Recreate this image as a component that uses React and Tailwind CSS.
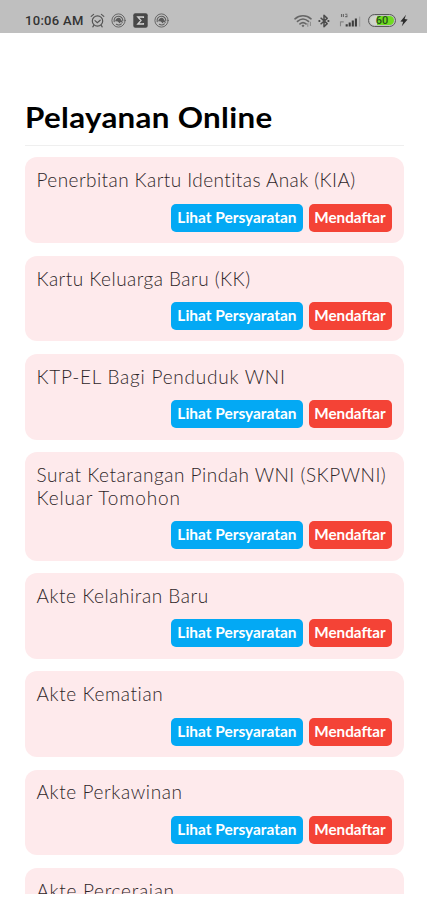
const services = [
  { lines: [{ text: 'Penerbitan Kartu Identitas Anak (KIA)', spacing: 'tracking-[0.43px]' }] },
  { lines: [{ text: 'Kartu Keluarga Baru (KK)', spacing: 'tracking-[0.47px]' }] },
  { lines: [{ text: 'KTP-EL Bagi Penduduk WNI', spacing: 'tracking-[0.77px]' }] },
  {
    lines: [
      { text: 'Surat Ketarangan Pindah WNI (SKPWNI)', spacing: 'tracking-[0.52px]' },
      { text: 'Keluar Tomohon', spacing: 'tracking-[0.83px]' },
    ],
  },
  { lines: [{ text: 'Akte Kelahiran Baru', spacing: 'tracking-[0.55px]' }] },
  { lines: [{ text: 'Akte Kematian', spacing: 'tracking-[0.6px]' }] },
  { lines: [{ text: 'Akte Perkawinan', spacing: 'tracking-[0.6px]' }] },
  { lines: [{ text: 'Akte Perceraian', spacing: 'tracking-[0.7px]' }] },
]

function AlarmIcon() {
  return (
    <svg className="w-[15px] h-[15px]" viewBox="0 0 15 15" fill="none" stroke="#555" strokeWidth="1.2" strokeLinecap="round">
      <circle cx="7.5" cy="8" r="5.2" />
      <path d="M1.2 3.4 3.6 1.4M13.8 3.4 11.4 1.4M5 7.6 7.3 9.6 10.2 7.2M3.8 12.4 2.8 13.8M11.2 12.4 12.2 13.8" />
    </svg>
  )
}

function SwirlIcon() {
  return (
    <svg className="w-[15px] h-[15px]" viewBox="0 0 15 15" fill="none" stroke="#5c5c5c" strokeLinecap="round">
      <circle cx="7.5" cy="7.5" r="6.6" strokeWidth="0.9" />
      <path d="M3.2 8.6C2.6 5.6 4.6 3.2 7.3 3.2c2.8 0 4.7 2 4.5 4.6M5.4 11.3c1.6.9 3.6.7 4.9-.4" strokeWidth="1.1" />
      <path d="M5 7.8C5.6 5.8 7 5.2 8.6 5.8L10.4 8.6 7.8 7.6 8.6 9.4" strokeWidth="1.5" fill="#5c5c5c" />
    </svg>
  )
}

function SigmaIcon() {
  return (
    <svg className="w-[15px] h-[15px]" viewBox="0 0 15 15" fill="none">
      <rect x="0.3" y="0.3" width="14.4" height="14.4" rx="2" fill="#484848" />
      <path d="M10.4 5V4H4.8L8 7.5 4.8 11h5.6v-1" stroke="#d2d2d2" strokeWidth="1.3" />
    </svg>
  )
}

function WifiIcon() {
  return (
    <svg className="w-[19px] h-[14px]" viewBox="0 0 19 14" fill="none" stroke="#666" strokeWidth="1.6" strokeLinecap="round">
      <path d="M1 4.8C5.6.8 12.4.8 17 4.8M3.5 7.4c3.4-3 7.6-3 11 0M6 9.9c2-1.8 4-1.8 6 0" />
      <path d="M9 10.4 7.5 11.7 9 13.2l1.5-1.5z" fill="#666" stroke="none" />
      <path d="M13.8 12.4v-2.8M16.4 11.6V8.2" stroke="#8a8a8a" strokeWidth="1" />
    </svg>
  )
}

function BluetoothIcon() {
  return (
    <svg className="w-[12px] h-[14px]" viewBox="0 0 12 14" fill="none" stroke="#4c4c4c" strokeWidth="1.5" strokeLinejoin="round">
      <path d="M2.6 3.8 9.2 9.6 6 12.8V1.2L9.2 4.4 2.6 10.2" />
      <path d="M1.4 5.9v2.2M10.4 5.9v2.2" strokeWidth="1.8" />
    </svg>
  )
}

function SignalIcon() {
  return (
    <svg className="w-[22px] h-[15px]" viewBox="0 0 22 15" fill="none">
      <path d="M2.5 1v3M4.4 1v3M6.2 1.2h2.2M6.2 3.6h2.2M8 2.2v1.6" stroke="#666" strokeWidth="1.1" />
      <path d="M1.5 8.6v4.6M1.5 8.9h3.2" stroke="#858585" strokeWidth="1.1" />
      <path d="M7.7 11.2v2.4M10.7 9.6v4M13.8 7.6v6M16.9 5.6v8" stroke="#3d3d3d" strokeWidth="2.1" />
      <path d="M20.6 3.6v10" stroke="#a0a0a0" strokeWidth="1.3" />
    </svg>
  )
}

function BoltIcon() {
  return (
    <svg className="w-[8px] h-[13px]" viewBox="0 0 8 12" fill="#2c2c2c">
      <path d="M6 .2.4 6.9l2.8.3-1.4 4.6L7.6 5l-3-.4z" />
    </svg>
  )
}

function StatusBar() {
  return (
    <div className="flex items-start justify-between h-[33px] bg-[#bfbfbf] pt-[13px] pl-[25px] pr-[19px]">
      <div className="flex items-center h-[15px]">
        <span className="w-[59px] font-[Roboto,sans-serif] text-[13px] leading-[15px] font-medium tracking-[0.3px] text-[#333] whitespace-nowrap">10:06 AM</span>
        <div className="flex items-center gap-[6.5px] ml-[5.5px]">
          <AlarmIcon />
          <SwirlIcon />
          <SigmaIcon />
          <SwirlIcon />
        </div>
      </div>
      <div className="flex items-center h-[15px]">
        <WifiIcon />
        <div className="flex ml-[5px]">
          <BluetoothIcon />
        </div>
        <div className="flex ml-[9px]">
          <SignalIcon />
        </div>
        <div className="flex w-[28px] h-[13px] ml-[7px] p-[1px] rounded-full border border-[#5a5a5a]">
          <div className="flex items-center justify-center w-full rounded-full bg-linear-to-r from-[#d0d5cc] from-30% to-[#6fdc20] to-30% font-[Roboto,sans-serif] text-[11px] leading-none font-medium text-[#28511b]">
            60
          </div>
        </div>
        <div className="flex ml-[4px]">
          <BoltIcon />
        </div>
      </div>
    </div>
  )
}

function ServiceCard({ lines }) {
  return (
    <div className="rounded-[12px] bg-[#feeaec] px-[12px] pt-[11.8px] pb-[11.4px]">
      <div className="text-[19px] leading-[22.6px] font-light text-[#2e2629]">
        {lines.map((line) => (
          <p key={line.text} className={`whitespace-nowrap ${line.spacing}`}>{line.text}</p>
        ))}
      </div>
      <div className="flex justify-end gap-[6px] mt-[11.9px] text-[14.5px] leading-[28px] font-bold text-white whitespace-nowrap">
        <button className="flex justify-center w-[132px] h-[28px] rounded-[5px] bg-[#03a9f4]">
          <span className="scale-x-[1.065]">Lihat Persyaratan</span>
        </button>
        <button className="flex justify-center w-[83px] h-[28px] rounded-[5px] bg-[#f44336]">
          <span className="scale-x-[1.05]">Mendaftar</span>
        </button>
      </div>
    </div>
  )
}

export default function App() {
  return (
    <div className="w-[427px] h-[900px] overflow-hidden bg-white font-[Lato,sans-serif]">
      <StatusBar />
      <main className="h-[861px] overflow-hidden pt-[66px] pl-[24.5px] pr-[23.5px]">
        <h1 className="h-[47px] border-b border-[#efefef] text-[29px] leading-[36px] font-bold text-black">
          <span className="inline-block origin-left scale-x-[1.08] tracking-[0.3px]">Pelayanan Online</span>
        </h1>
        <div className="flex flex-col gap-[12.6px] mt-[11.45px]">
          {services.map((service) => (
            <ServiceCard key={service.lines[0].text} lines={service.lines} />
          ))}
        </div>
      </main>
    </div>
  )
}
